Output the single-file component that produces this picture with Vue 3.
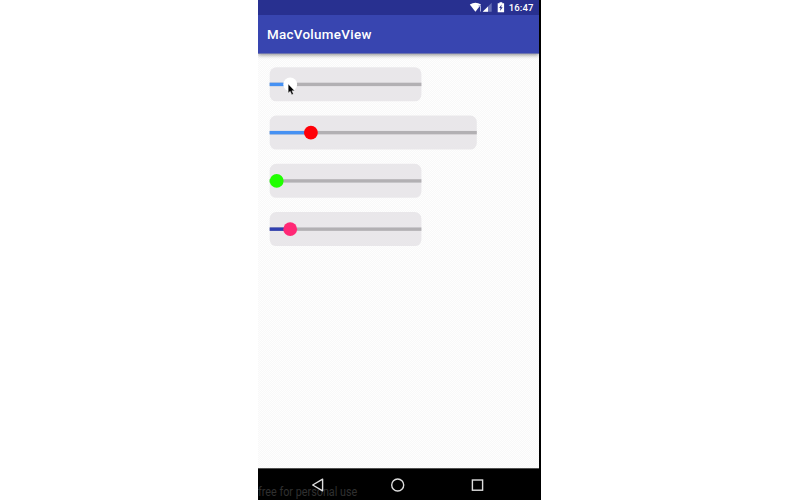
<script setup>
const sliders = [
  { width: 151.7, filled: 20.5, track: '#4691f3', thumb: '#ffffff' },
  { width: 207.1, filled: 41.2, track: '#4691f3', thumb: '#ff0008' },
  { width: 151.7, filled: 7, track: '#20ff00', thumb: '#20ff00' },
  { width: 151.7, filled: 20.5, track: '#303fb0', thumb: '#ff2875' },
].map((s, i) => ({ ...s, y: 0.3 + i * 0.25 }))
</script>

<template>
  <main class="page">
    <div class="phone">
      <header class="status">
        <svg class="status-icons" width="38" height="13" viewBox="0 0 38 13">
          <path d="M.8 3.4Q6.4-.1 12 3.4L6.4 10.8Z" fill="#fff" />
          <path d="M9.3 4.8H11.5V10.5" fill="none" stroke="#a9aeda" stroke-width="1" />
          <path d="M22.7 1.8V10.8H13.7Z" fill="#6870b6" />
          <path d="M19 5.5V10.8H13.7Z" fill="#fff" />
          <path d="M28.7 2.2H30.5V1.3H33.3V2.2H35.1V11.2H28.7Z" fill="#fff" />
          <path d="M32.6 3.4L30.1 7H31.5L31 9.9L33.7 6.2H32.2Z" fill="#2b3190" />
        </svg>
        <span class="time">16:47</span>
      </header>
      <div class="appbar">MacVolumeView</div>
      <section class="content">
        <svg v-for="(s, i) in sliders" :key="i" class="slider" width="209" height="36">
          <g :transform="`translate(.7 ${s.y})`">
            <rect :width="s.width" height="34" rx="6.5" fill="#e9e7ea" />
            <rect y="15.4" :width="s.width" height="3.4" fill="#b2b0b3" />
            <rect y="15.4" :width="s.filled" height="3.4" :fill="s.track" />
            <circle :cx="s.filled" cy="17.1" r="6.9" :fill="s.thumb" />
            <path
              v-if="i === 0"
              d="M18.5 16.8V25.8L20.5 24L22.1 27.4L23.7 26.7L22.2 23.5H24.9Z"
              fill="#000"
              stroke="#fff"
              stroke-width=".4"
            />
          </g>
        </svg>
      </section>
      <nav class="nav">
        <span class="note">free for personal use</span>
        <svg class="nav-icons" width="281" height="32" viewBox="258 468 281 32" fill="none" stroke="#dedede" stroke-width="1.4">
          <path d="M322.6 479.2V490.8L312.7 485Z" stroke-linejoin="round" />
          <circle cx="397.7" cy="485" r="6" />
          <rect x="472.4" y="480" width="10.2" height="10.2" />
        </svg>
      </nav>
    </div>
  </main>
</template>

<style>
body {
  background: #fff;
}
</style>

<style scoped>
.page {
  width: 800px;
  height: 500px;
  overflow: hidden;
  background: #fff;
  font-family: Roboto, sans-serif;
}
.phone {
  box-sizing: border-box;
  width: 283px;
  height: 500px;
  margin-left: 258px;
  border-right: 2px solid #000;
  display: flex;
  flex-direction: column;
  background: #000;
}
.status {
  height: 15px;
  flex: none;
  box-sizing: border-box;
  padding-right: 5.5px;
  display: flex;
  justify-content: flex-end;
  align-items: center;
  gap: 2px;
  background: #283090;
  color: #fff;
}
.status-icons {
  flex: none;
}
.time {
  font-size: 9.6px;
  letter-spacing: 0.1px;
  line-height: 15px;
  font-weight: 500;
}
.appbar {
  box-sizing: border-box;
  height: 39px;
  flex: none;
  padding-left: 9px;
  border-bottom: 1px solid #6e75ae;
  background: #3845b0;
  color: #fff;
  font-size: 13.4px;
  letter-spacing: 0.3px;
  font-weight: 500;
  line-height: 40px;
  z-index: 1;
  box-shadow: 0 1px 4px rgba(0, 0, 0, 0.45);
  clip-path: inset(0 0 -8px 0);
}
.content {
  flex: 1;
  padding: 13px 0 0 11px;
  display: flex;
  flex-direction: column;
  gap: 12px;
  background-color: #fbfbfb;
  background-image: conic-gradient(#f8f8f8 25%, #fefefe 0 50%, #f8f8f8 0 75%, #fefefe 0);
  background-size: 2px 2px;
}
.slider {
  display: block;
  flex: none;
}
.nav {
  position: relative;
  height: 32px;
  box-sizing: border-box;
  border-top: 1px solid #505050;
  flex: none;
  background: #000;
}
.note {
  position: absolute;
  left: 0;
  top: 16px;
  color: #303030;
  font-size: 12px;
  line-height: 15px;
  white-space: nowrap;
  transform: scaleX(0.9);
  transform-origin: 0 50%;
}
.nav-icons {
  position: absolute;
  left: 0;
  top: -1px;
}
</style>
